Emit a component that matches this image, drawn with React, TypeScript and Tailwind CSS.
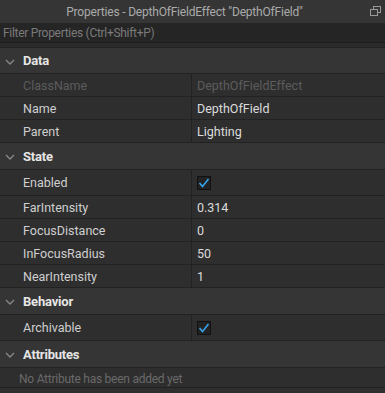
import React from "react";

const font = { fontFamily: "Roboto, Lato, sans-serif" };

function Chevron() {
  return (
    <svg width="10" height="6" viewBox="0 0 10 6" className="absolute left-[5px] top-[11px]">
      <path d="M1 1 L5 5 L9 1" stroke="#8a8a8a" strokeWidth="1.3" fill="none" />
    </svg>
  );
}

function Header({ label, h = "h-[27px]" }: { label: string; h?: string }) {
  return (
    <div className={`relative ${h} bg-[#353535] border-b border-[#222] flex items-center pl-[23px] pt-[1px]`}>
      <Chevron />
      <span className="text-[13px] font-bold text-[#e6e6e6] tracking-[-0.2px]">{label}</span>
    </div>
  );
}

function Check() {
  return (
    <div className="w-[14px] h-[14px] bg-[#222] border border-[#111] flex items-center justify-center">
      <svg width="12" height="10" viewBox="0 0 12 10">
        <path d="M1.5 5 L4.5 8.5 L10.5 1" stroke="#35a3ec" strokeWidth="1.6" fill="none" />
      </svg>
    </div>
  );
}

function Row({
  name,
  value,
  check,
  dim,
  h = "h-[23px]",
}: {
  name: string;
  value?: string;
  check?: boolean;
  dim?: boolean;
  h?: string;
}) {
  return (
    <div className={`flex ${h} border-b border-[#222] bg-[#2e2e2e]`}>
      <div className={`w-[192px] border-r border-[#222] flex items-center pl-[23px] pt-[2px] text-[12.5px] ${dim ? "text-[#5c5c5c]" : "text-[#cfcfcf]"}`}>
        {name}
      </div>
      <div className={`flex-1 flex items-center pl-[5px] ${check ? "" : "pt-[2px]"} text-[12.5px] ${dim ? "text-[#5c5c5c]" : "text-[#dcdcdc]"}`}>
        {check ? <Check /> : value}
      </div>
    </div>
  );
}

export default function App() {
  return (
    <div className="w-[385px] h-[393px] bg-[#2e2e2e] overflow-hidden" style={font}>
      <div className="relative h-[23px] bg-[#353535] flex items-center justify-center pr-[16px] text-[12px] text-[#aaaaaa] tracking-[-0.2px]">
        Properties - DepthOfFieldEffect "DepthOfField"
        <svg width="11" height="11" viewBox="0 0 11 11" className="absolute right-[4px] top-[6px]">
          <rect x="3.5" y="0.5" width="7" height="6" stroke="#9a9a9a" fill="none" />
          <rect x="0.5" y="3.5" width="7" height="6" stroke="#9a9a9a" fill="#353535" />
        </svg>
      </div>
      <div className="h-[20px] bg-[#252525] border-b border-[#1c1c1c] flex items-center pl-[3px] text-[12px] text-[#7a7a7a] tracking-[-0.3px]">
        Filter Properties (Ctrl+Shift+P)
      </div>
      <div className="h-[5px] bg-[#2b2b2b] border-b border-[#222]" />
      <Header label="Data" h="h-[26px]" />
      <Row name="ClassName" value="DepthOfFieldEffect" dim />
      <Row name="Name" value="DepthOfField" />
      <Row name="Parent" value="Lighting" />
      <Header label="State" />
      <Row name="Enabled" check h="h-[26px]" />
      <Row name="FarIntensity" value="0.314" />
      <Row name="FocusDistance" value="0" />
      <Row name="InFocusRadius" value="50" />
      <Row name="NearIntensity" value="1" />
      <Header label="Behavior" />
      <Row name="Archivable" check h="h-[26px]" />
      <Header label="Attributes" />
      <div className="h-[20px] border-b border-[#222] flex items-center pl-[19px] pt-[2px] text-[12px] text-[#6a6a6a] tracking-[-0.25px]">
        No Attribute has been added yet
      </div>
    </div>
  );
}
